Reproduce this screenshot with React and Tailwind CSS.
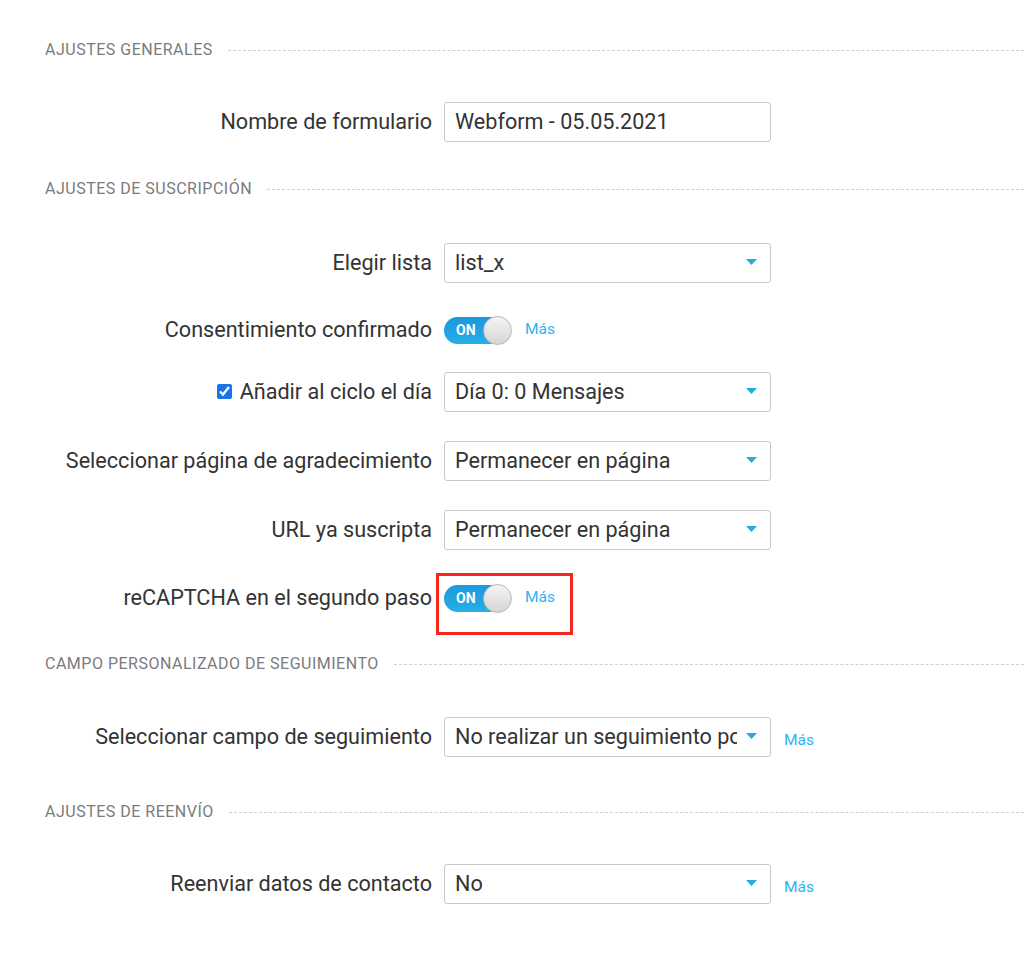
import { useState } from 'react';

const font = { fontFamily: 'Roboto, "Liberation Sans", sans-serif' };

function SectionHeader({ title, className = '' }) {
  return (
    <div className={`flex items-center h-[20px] pl-[45px] pt-[2px] ${className}`}>
      <span className="text-[16px] text-[#7b7b7b] tracking-[0.5px] whitespace-nowrap">{title}</span>
      <div className="flex-1 ml-[15px] border-t border-dashed border-[#cfcfcf]" />
    </div>
  );
}

function Row({ label, children, className = '' }) {
  return (
    <div className={`flex items-center h-[40px] ${className}`}>
      <div className="w-[432px] shrink-0 flex justify-end items-center text-[21.6px] text-[#333] whitespace-nowrap">
        {label}
      </div>
      <div className="ml-[12px] flex items-center relative">{children}</div>
    </div>
  );
}

function More({ className = '' }) {
  return <a className={`text-[15.5px] text-[#2db3ef] cursor-pointer ${className}`}>Más</a>;
}

function Select({ value }) {
  return (
    <div className="w-[327px] h-[40px] border border-[#c8c8c8] rounded-[3px] flex items-center pl-[10px] pr-[13px] bg-white">
      <span className="flex-1 overflow-hidden whitespace-nowrap text-[21.6px] text-[#333]">{value}</span>
      <svg width="11" height="6" viewBox="0 0 11 6" className="ml-[9px] shrink-0 -mt-[3px]">
        <path d="M0 0 H11 L5.5 6 Z" fill="#27a9e3" />
      </svg>
    </div>
  );
}

function Toggle() {
  const [on, setOn] = useState(true);
  return (
    <button
      onClick={() => setOn(!on)}
      className="relative w-[67px] h-[27px] rounded-full bg-gradient-to-b from-[#1b98dc] to-[#27aee8] flex items-center"
    >
      <span className="ml-[12px] text-[14px] font-bold text-white leading-none">ON</span>
      <span className="absolute right-[-1px] top-[-1px] w-[29px] h-[29px] rounded-full border border-[#b9b9b9] bg-gradient-to-b from-[#f4f4f4] to-[#d6d6d6]" />
    </button>
  );
}

export default function App() {
  return (
    <div className="w-[1024px] min-h-[953px] bg-white pt-[39px]" style={font}>
      <SectionHeader title="AJUSTES GENERALES" />
      <Row label="Nombre de formulario" className="mt-[43px]">
        <div className="w-[327px] h-[40px] border border-[#c8c8c8] rounded-[3px] flex items-center pl-[10px] text-[21.6px] text-[#333]">
          Webform - 05.05.2021
        </div>
      </Row>

      <SectionHeader title="AJUSTES DE SUSCRIPCIÓN" className="mt-[36px]" />
      <Row label="Elegir lista" className="mt-[45px]">
        <Select value="list_x" />
      </Row>
      <Row label="Consentimiento confirmado" className="mt-[27px]">
        <Toggle />
        <More className="ml-[14px]" />
      </Row>
      <Row
        label={
          <>
            <input type="checkbox" defaultChecked className="w-[15px] h-[15px] accent-[#1a73e8] mr-[8px]" />
            Añadir al ciclo el día
          </>
        }
        className="mt-[22px]"
      >
        <Select value="Día 0: 0 Mensajes" />
      </Row>
      <Row label="Seleccionar página de agradecimiento" className="mt-[29px]">
        <Select value="Permanecer en página" />
      </Row>
      <Row label="URL ya suscripta" className="mt-[29px]">
        <Select value="Permanecer en página" />
      </Row>
      <Row label="reCAPTCHA en el segundo paso" className="mt-[28px]">
        <Toggle />
        <More className="ml-[14px]" />
        <div className="absolute left-[-8px] top-[-12px] w-[137px] h-[62px] border-[3px] border-[#f4281c] pointer-events-none" />
      </Row>

      <SectionHeader title="CAMPO PERSONALIZADO DE SEGUIMIENTO" className="mt-[35px]" />
      <Row label="Seleccionar campo de seguimiento" className="mt-[44px]">
        <Select value="No realizar un seguimiento por campo" />
        <More className="ml-[13px] mt-[8px]" />
      </Row>

      <SectionHeader title="AJUSTES DE REENVÍO" className="mt-[44px]" />
      <Row label="Reenviar datos de contacto" className="mt-[43px]">
        <Select value="No" />
        <More className="ml-[13px] mt-[8px]" />
      </Row>
    </div>
  );
}
